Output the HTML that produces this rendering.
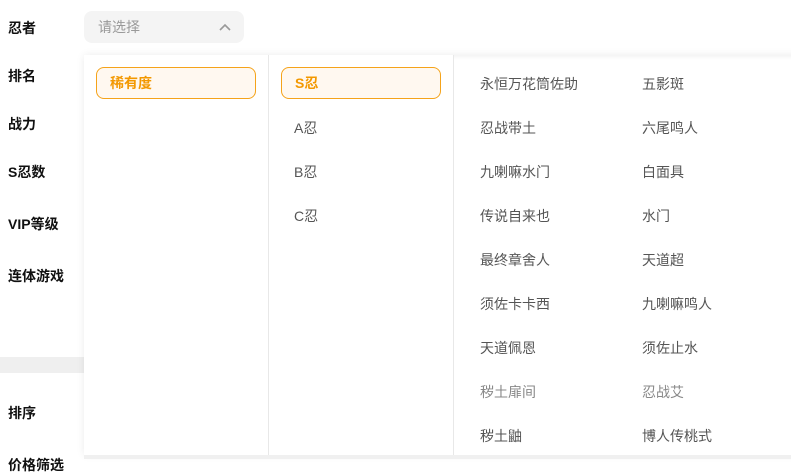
<!DOCTYPE html><html><head><meta charset="utf-8"><style>
*{margin:0;padding:0;box-sizing:border-box}
body{width:791px;height:459px;overflow:hidden;background:#fff;font-family:"Liberation Sans","Noto Sans CJK SC",sans-serif;font-size:14px;position:relative}
.a{position:absolute;white-space:nowrap}
.l{font-weight:bold;color:#111;left:8px}
.t{color:#555}
.btn{position:absolute;height:32px;border:1px solid #f5a31a;background:#fff8f0;border-radius:8px;color:#f39800;font-weight:bold;line-height:30px;padding-left:13px}
</style></head><body>
<div class="a l" style="top:18px">忍者</div>
<div class="a l" style="top:66px">排名</div>
<div class="a l" style="top:114px">战力</div>
<div class="a l" style="top:162px">S忍数</div>
<div class="a l" style="top:214px">VIP等级</div>
<div class="a l" style="top:266px">连体游戏</div>
<div class="a" style="top:357px;left:0;width:84px;height:16px;background:#efefef"></div>
<div class="a l" style="top:403px">排序</div>
<div class="a l" style="top:455px">价格筛选</div>
<div class="a" style="left:84px;top:11px;width:160px;height:32px;background:#f4f4f4;border-radius:8px;color:#999;line-height:32px;padding-left:14px">请选择
<svg style="position:absolute;left:135px;top:12px" width="12" height="8" viewBox="0 0 12 8"><path d="M1 7L6 2L11 7" fill="none" stroke="#999" stroke-width="1.6"/></svg></div>
<div class="a" style="left:84px;top:55px;width:720px;height:400px;background:#fff;box-shadow:0 0 8px rgba(0,0,0,.08)"></div>
<div class="a" style="left:454px;top:55px;width:340px;height:5px;background:linear-gradient(#f4f4f4,#fff)"></div>
<div class="a" style="left:268px;top:55px;width:1px;height:400px;background:#e8e8e8"></div>
<div class="a" style="left:453px;top:55px;width:1px;height:400px;background:#e8e8e8"></div>
<div class="a" style="left:84px;top:455px;width:707px;height:4px;background:#f0f0f0"></div>
<div class="btn" style="left:96px;top:67px;width:160px">稀有度</div>
<div class="btn" style="left:281px;top:67px;width:160px">S忍</div>
<div class="a t" style="left:294px;top:118px">A忍</div>
<div class="a t" style="left:294px;top:162px">B忍</div>
<div class="a t" style="left:294px;top:206px">C忍</div>
<div class="a t" style="left:480px;top:74px">永恒万花筒佐助</div><div class="a t" style="left:642px;top:74px">五影斑</div>
<div class="a t" style="left:480px;top:118px">忍战带土</div><div class="a t" style="left:642px;top:118px">六尾鸣人</div>
<div class="a t" style="left:480px;top:162px">九喇嘛水门</div><div class="a t" style="left:642px;top:162px">白面具</div>
<div class="a t" style="left:480px;top:206px">传说自来也</div><div class="a t" style="left:642px;top:206px">水门</div>
<div class="a t" style="left:480px;top:250px">最终章舍人</div><div class="a t" style="left:642px;top:250px">天道超</div>
<div class="a t" style="left:480px;top:294px">须佐卡卡西</div><div class="a t" style="left:642px;top:294px">九喇嘛鸣人</div>
<div class="a t" style="left:480px;top:338px">天道佩恩</div><div class="a t" style="left:642px;top:338px">须佐止水</div>
<div class="a" style="left:480px;top:382px;color:#888">秽土扉间</div><div class="a" style="left:642px;top:382px;color:#888">忍战艾</div>
<div class="a t" style="left:480px;top:426px">秽土鼬</div><div class="a t" style="left:642px;top:426px">博人传桃式</div>
</body></html>
